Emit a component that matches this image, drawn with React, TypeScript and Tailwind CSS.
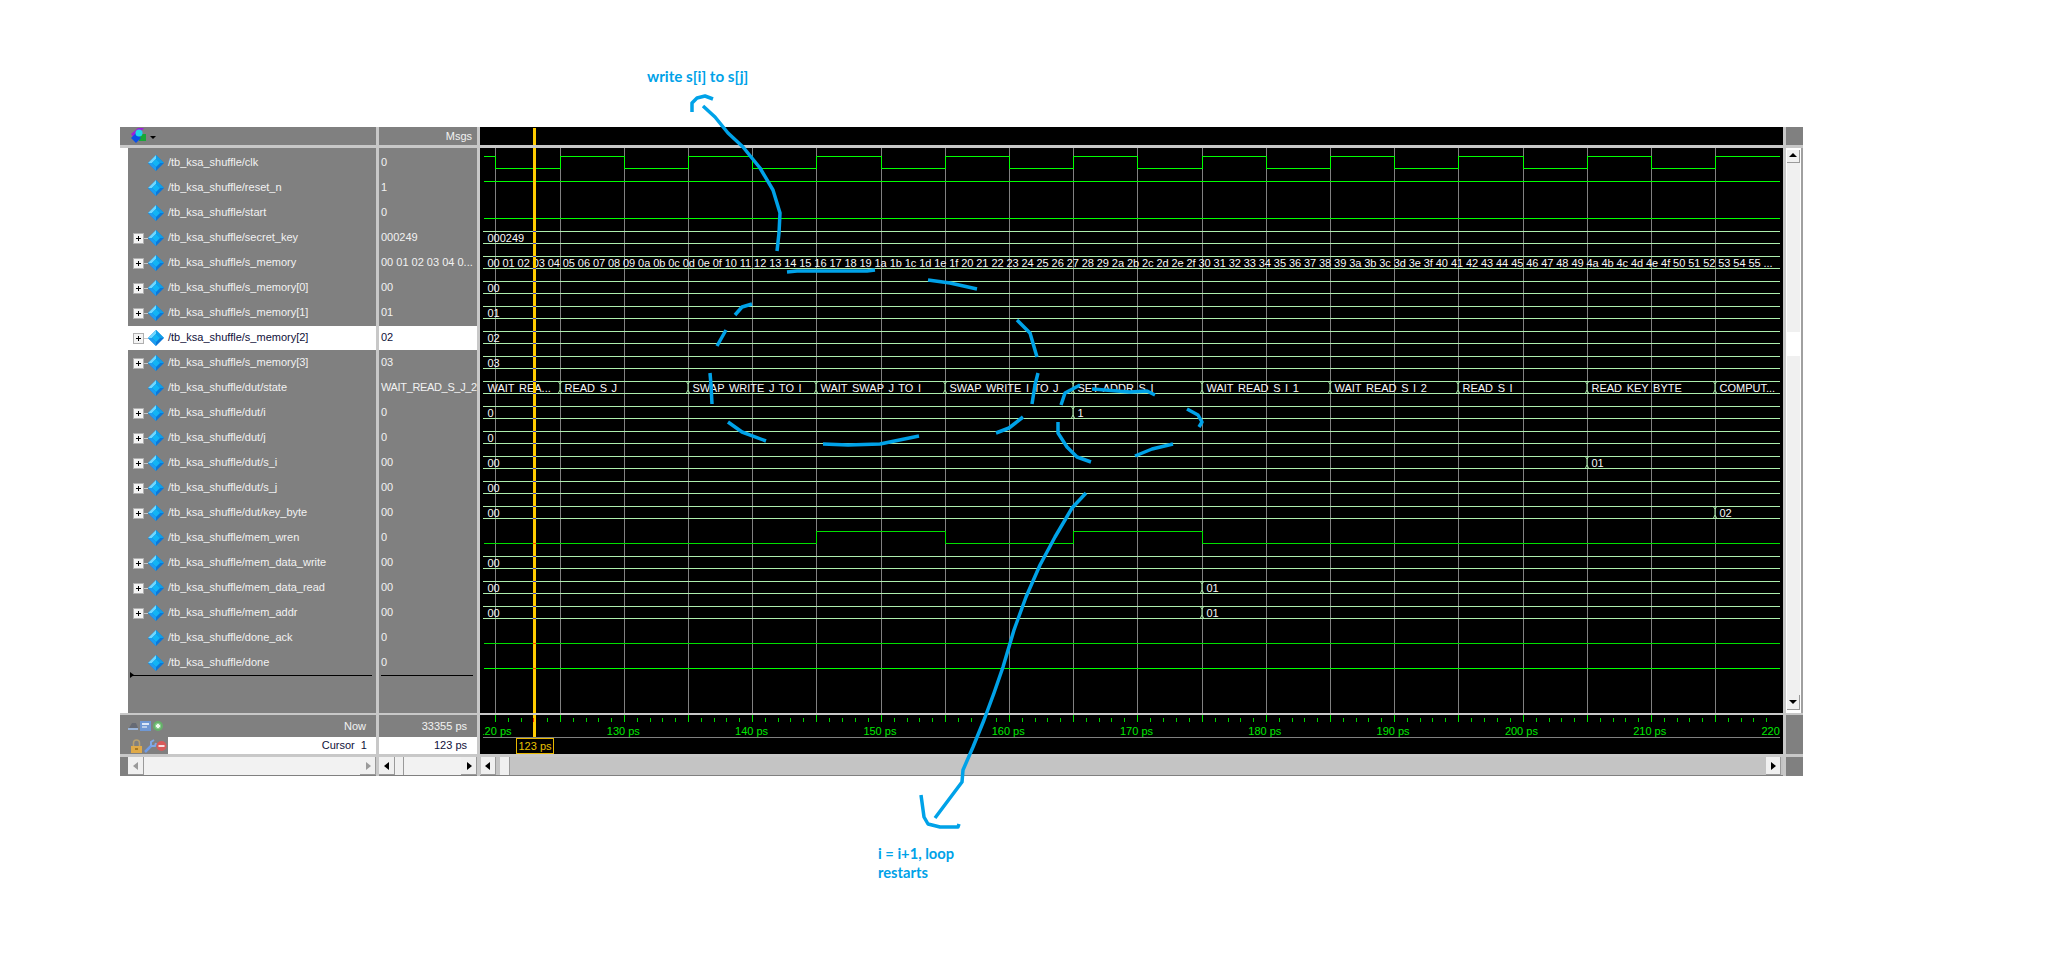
import React from "react";

const font = { fontFamily: "'Liberation Sans', Arial, sans-serif" };

// clock edges, these are also the vertical grid lines of the wave window
const edges = [495, 560, 624, 688, 752, 816, 881, 945, 1009, 1073, 1137, 1202, 1266, 1330, 1394, 1458, 1523, 1587, 1651, 1715];
const lineColor = "#aeeeae";
const green = "#00ff00";

type Seg = { x: number; text: string; len?: number };
type Signal = {
  name: string;
  value: string;
  bus?: boolean;
  level?: 0 | 1;
  segs?: Seg[];
};

const hexList = Array.from({ length: 86 }, (_, i) => i.toString(16).padStart(2, "0")).join(" ") + " ...";

const signals: Signal[] = [
  { name: "/tb_ksa_shuffle/clk", value: "0" },
  { name: "/tb_ksa_shuffle/reset_n", value: "1", level: 1 },
  { name: "/tb_ksa_shuffle/start", value: "0", level: 0 },
  { name: "/tb_ksa_shuffle/secret_key", value: "000249", bus: true, segs: [{ x: 487.5, text: "000249" }] },
  { name: "/tb_ksa_shuffle/s_memory", value: "00 01 02 03 04 0...", bus: true, segs: [{ x: 487.5, text: hexList, len: 1285 }] },
  { name: "/tb_ksa_shuffle/s_memory[0]", value: "00", bus: true, segs: [{ x: 487.5, text: "00" }] },
  { name: "/tb_ksa_shuffle/s_memory[1]", value: "01", bus: true, segs: [{ x: 487.5, text: "01" }] },
  { name: "/tb_ksa_shuffle/s_memory[2]", value: "02", bus: true, segs: [{ x: 487.5, text: "02" }] },
  { name: "/tb_ksa_shuffle/s_memory[3]", value: "03", bus: true, segs: [{ x: 487.5, text: "03" }] },
  {
    name: "/tb_ksa_shuffle/dut/state",
    value: "WAIT_READ_S_J_2",
    segs: [
      { x: 487.5, text: "WAIT  REA..." },
      { x: 560, text: "READ  S  J" },
      { x: 688, text: "SWAP  WRITE  J  TO  I" },
      { x: 816, text: "WAIT  SWAP  J  TO  I" },
      { x: 945, text: "SWAP  WRITE  I  TO  J" },
      { x: 1073, text: "SET  ADDR  S  I" },
      { x: 1202, text: "WAIT  READ  S  I  1" },
      { x: 1330, text: "WAIT  READ  S  I  2" },
      { x: 1458, text: "READ  S  I" },
      { x: 1587, text: "READ  KEY  BYTE" },
      { x: 1715, text: "COMPUT..." },
    ],
  },
  { name: "/tb_ksa_shuffle/dut/i", value: "0", bus: true, segs: [{ x: 487.5, text: "0" }, { x: 1073, text: "1" }] },
  { name: "/tb_ksa_shuffle/dut/j", value: "0", bus: true, segs: [{ x: 487.5, text: "0" }] },
  { name: "/tb_ksa_shuffle/dut/s_i", value: "00", bus: true, segs: [{ x: 487.5, text: "00" }, { x: 1587, text: "01" }] },
  { name: "/tb_ksa_shuffle/dut/s_j", value: "00", bus: true, segs: [{ x: 487.5, text: "00" }] },
  { name: "/tb_ksa_shuffle/dut/key_byte", value: "00", bus: true, segs: [{ x: 487.5, text: "00" }, { x: 1715, text: "02" }] },
  { name: "/tb_ksa_shuffle/mem_wren", value: "0" },
  { name: "/tb_ksa_shuffle/mem_data_write", value: "00", bus: true, segs: [{ x: 487.5, text: "00" }] },
  { name: "/tb_ksa_shuffle/mem_data_read", value: "00", bus: true, segs: [{ x: 487.5, text: "00" }, { x: 1202, text: "01" }] },
  { name: "/tb_ksa_shuffle/mem_addr", value: "00", bus: true, segs: [{ x: 487.5, text: "00" }, { x: 1202, text: "01" }] },
  { name: "/tb_ksa_shuffle/done_ack", value: "0", level: 0 },
  { name: "/tb_ksa_shuffle/done", value: "0", level: 0 },
];

// hand drawn paint strokes, page coordinates
const strokes = [
  "692,112 692,103 697,98 705,96 713,99",
  "703,106 715,117 728,133 743,147 760,168 773,190 780,213 779,233 777,251",
  "787,272 797,271 867,271 875,270",
  "928,280 950,283 977,289",
  "735,315 742,307 752,304",
  "717,346 726,330",
  "1017,320 1030,333 1037,357",
  "710,373 711,385 712,404",
  "728,422 742,432 766,441",
  "823,444 848,445 880,444 919,436",
  "996,433 1009,428 1023,417",
  "1038,373 1035,385 1032,404",
  "1061,405 1065,393 1080,385",
  "1092,389 1130,392 1147,391 1155,395",
  "1187,409 1198,415 1202,422 1199,427",
  "1058,422 1058,433 1067,447 1077,457 1091,462",
  "1135,456 1152,449 1173,444",
  "1086,493 1072,508 1055,537 1040,565 1026,597 1014,630 1003,667 994,693 984,720 973,747 963,770 962,782 947,802 935,818",
  "921,795 924,817 928,824 940,827 958,827 959,824",
];

function Diamond() {
  return (
    <svg width="16" height="16" viewBox="0 0 16 16" className="shrink-0" shapeRendering="geometricPrecision">
      <polygon points="8,0 16,8 8,16 0,8" fill="#0a78d8" />
      <polygon points="8,0 0,8 4,8 8,4" fill="#6fd8ff" />
      <polygon points="8,0 16,8 12,8 8,4" fill="#0f9fe8" />
      <polygon points="0,8 8,16 8,12 4,8" fill="#1f9cf0" />
      <polygon points="8,4 12,8 8,12 4,8" fill="#12b4f4" />
    </svg>
  );
}

function Plus() {
  return (
    <svg width="15" height="12" viewBox="0 0 15 12" className="shrink-0">
      <rect x="10" y="6" width="5" height="1" fill="#c8c8c8" />
      <rect x="0.5" y="1.5" width="10" height="10" fill="#f4f4f4" stroke="#b0b0b0" />
      <rect x="3" y="6" width="5" height="1" fill="#000" />
      <rect x="5" y="4" width="1" height="5" fill="#000" />
    </svg>
  );
}

function SignalRow({ s, selected }: { s: Signal; selected: boolean }) {
  return (
    <div className={`flex h-6 items-center mb-px pl-[5px] text-[11px] ${selected ? "bg-white text-[#10103a]" : "text-[#f2f2f2]"}`}>
      <div className="w-[15px] shrink-0">{s.bus ? <Plus /> : null}</div>
      <Diamond />
      <span className="ml-1 mb-[2px] whitespace-pre">{s.name}</span>
    </div>
  );
}

function ValueRow({ s, selected }: { s: Signal; selected: boolean }) {
  return (
    <div className={`flex h-6 items-center mb-px pl-[2px] pb-[2px] text-[11px] whitespace-pre ${selected ? "bg-white text-[#10103a]" : "text-[#f2f2f2]"}`}>
      {s.value === "WAIT_READ_S_J_2" ? <span className="tracking-[-0.35px]">{s.value}</span> : s.value}
    </div>
  );
}

function Bracket({ x, top, bottom }: { x: number; top: number; bottom: number }) {
  return (
    <path
      d={`M${x - 2} ${top} L${x} ${top + 3} V${bottom - 3} L${x - 2} ${bottom + 1} M${x + 2} ${top} L${x} ${top + 3} M${x} ${bottom - 3} L${x + 2} ${bottom + 1}`}
      stroke={lineColor}
      fill="none"
    />
  );
}

function levelPath(i: number, transitions: number[], startHigh: boolean) {
  const hi = 156.5 + 25 * i;
  const lo = 168.5 + 25 * i;
  let high = startHigh;
  let d = `M484 ${high ? hi : lo}`;
  for (const x of transitions) {
    d += ` H${x + 0.5}`;
    high = !high;
    d += ` V${high ? hi : lo}`;
  }
  return d + " H1780";
}

function Waves() {
  return (
    <svg width="1303" height="565" viewBox="480 148 1303 565" className="block" style={font}>
      <rect x="480" y="148" width="1303" height="565" fill="#000" />
      <g shapeRendering="crispEdges">
        {edges.map((x) => (
          <line key={x} x1={x + 0.5} x2={x + 0.5} y1="148" y2="713" stroke="#808080" />
        ))}
      </g>
      {signals.map((s, i) => {
        const top = 156 + 25 * i;
        const bottom = 168 + 25 * i;
        return (
          <g key={s.name}>
            {s.segs ? (
              <g shapeRendering="crispEdges">
                <line x1="483" x2="1780" y1={top + 0.5} y2={top + 0.5} stroke={lineColor} />
                <line x1="483" x2="1780" y1={bottom + 0.5} y2={bottom + 0.5} stroke={lineColor} />
              </g>
            ) : null}
            {s.segs?.map((seg) => (
              <g key={seg.x}>
                {seg.x > 490 ? <Bracket x={seg.x} top={top} bottom={bottom} /> : null}
                <text
                  x={seg.x > 490 ? seg.x + 4.5 : seg.x}
                  y={bottom - 1}
                  fontSize="11"
                  fill="#f8f8f8"
                  wordSpacing={s.bus ? undefined : "-0.75"}
                  className="whitespace-pre"
                  textLength={seg.len}
                  lengthAdjust={seg.len ? "spacing" : undefined}
                >
                  {seg.text}
                </text>
              </g>
            ))}
          </g>
        );
      })}
      <g shapeRendering="crispEdges" fill="none" stroke={green}>
        <path d={levelPath(0, edges, true)} />
        <path d={levelPath(1, [], true)} />
        <path d={levelPath(2, [], false)} />
        <path d={levelPath(15, [816, 945, 1073, 1202], false)} stroke="#00e000" />
        <path d={levelPath(19, [], false)} stroke="#00e000" />
        <path d={levelPath(20, [], false)} />
      </g>
      <rect x="533" y="148" width="3" height="565" fill="#ffcc00" />
      <g shapeRendering="crispEdges">
        {signals.map((s, i) =>
          s.segs ? (
            <g key={s.name}>
              <rect x="533" y={156 + 25 * i} width="3" height="1" fill="#3c3cd8" />
              <rect x="533" y={168 + 25 * i} width="3" height="1" fill="#3c3cd8" />
            </g>
          ) : null
        )}
        <rect x="533" y="543" width="3" height="1" fill="#ff3000" />
        <rect x="533" y="643" width="3" height="1" fill="#ff3000" />
        <rect x="533" y="668" width="3" height="1" fill="#ff3000" />
      </g>
    </svg>
  );
}

function Timeline() {
  const minors: number[] = [];
  edges.forEach((x, k) => {
    const next = k < edges.length - 1 ? edges[k + 1] : x + 64;
    for (let m = 1; m < 5; m++) minors.push(Math.round(x + ((next - x) * m) / 5));
  });
  const labels = Array.from({ length: 11 }, (_, i) => i);
  return (
    <svg width="1303" height="39" viewBox="480 715 1303 39" className="block" style={font}>
      <defs>
        <clipPath id="time-clip">
          <rect x="483" y="715" width="1297" height="39" />
        </clipPath>
      </defs>
      <rect x="480" y="715" width="1303" height="39" fill="#000" />
      <g clipPath="url(#time-clip)">
        <g shapeRendering="crispEdges">
          {edges.map((x) => (
            <line key={x} x1={x + 0.5} x2={x + 0.5} y1="715" y2="722" stroke="#00e000" />
          ))}
          {minors.map((x) => (
            <line key={x} x1={x + 0.5} x2={x + 0.5} y1="718" y2="722" stroke="#00d000" />
          ))}
          <line x1="483" x2="1780" y1="737.5" y2="737.5" stroke="#808080" />
        </g>
        {labels.map((i) => (
          <text key={i} x={495 + i * 128.3} y="735" fontSize="11" textAnchor="middle" fill="#00e800">
            {120 + i * 10} ps
          </text>
        ))}
      </g>
      <rect x="533" y="715" width="3" height="22" fill="#ffcc00" />
      <rect x="533" y="718" width="1" height="4" fill="#ff3000" />
      <rect x="516.5" y="738.5" width="37" height="15" fill="#000" stroke="#e8b800" />
      <text x="535" y="750" fontSize="11" textAnchor="middle" fill="#e8c000">
        123 ps
      </text>
    </svg>
  );
}

function ArrowButton({ dir, disabled, className }: { dir: "left" | "right" | "up" | "down"; disabled?: boolean; className: string }) {
  const points = {
    left: "6,1 1,5 6,9",
    right: "2,1 7,5 2,9",
    up: "0,6 4,2 8,6",
    down: "0,3 8,3 4,7",
  }[dir];
  return (
    <div className={`flex shrink-0 items-center justify-center bg-[#f0f0f0] border-r border-b border-[#9a9a9a] ${className}`}>
      <svg width="8" height="10" viewBox="0 0 8 10">
        <polygon points={points} fill={disabled ? "#9a9a9a" : "#000"} />
      </svg>
    </div>
  );
}

function HeaderIcon() {
  return (
    <svg width="17" height="16" viewBox="0 0 17 16">
      <polygon points="1,6 8,0 14,0 9,6 4,10" fill="#a020d8" />
      <rect x="9" y="6" width="7" height="7" fill="#18a838" />
      <polygon points="6,5 11,10 6,15 1,10" fill="#0a50e8" />
      <circle cx="9" cy="5" r="3.5" fill="#20d8e8" />
    </svg>
  );
}

function NowIcons() {
  return (
    <svg width="36" height="12" viewBox="0 0 36 12" className="block">
      <path d="M1 8 L4 3 H8 L10 8 Z" fill="#666a74" />
      <rect x="0" y="8" width="10" height="2" fill="#9ab4d8" />
      <rect x="12" y="1" width="11" height="10" fill="#6f98d4" />
      <rect x="14" y="3" width="7" height="2" fill="#dde8f8" />
      <rect x="14" y="6" width="5" height="2" fill="#b8cce8" />
      <circle cx="30" cy="6" r="5" fill="#66b06a" />
      <circle cx="30" cy="6" r="3" fill="#8fd094" />
      <rect x="28" y="5" width="4" height="2" fill="#eef8ee" />
      <rect x="29" y="4" width="2" height="4" fill="#eef8ee" />
    </svg>
  );
}

function CursorIcons() {
  return (
    <svg width="36" height="14" viewBox="0 0 36 14" className="block">
      <path d="M2.5 7 V4 A3 3 0 0 1 8.5 4 V7" fill="none" stroke="#b8a070" strokeWidth="1.5" />
      <rect x="0" y="7" width="11" height="7" fill="#e0aa48" />
      <rect x="4" y="9" width="3" height="2" fill="#a87820" />
      <path d="M14 13 L21 6" fill="none" stroke="#6f9ce8" strokeWidth="2.5" />
      <path d="M20 7 L20 3 L23 1 M20 7 L24 7 L25 4" fill="none" stroke="#7fa8e8" strokeWidth="2" />
      <circle cx="30.5" cy="7" r="5" fill="#d85a5a" />
      <rect x="27.5" y="6" width="6" height="2" fill="#f4e0e0" />
    </svg>
  );
}

export default function App() {
  return (
    <div className="relative h-[957px] overflow-hidden bg-white pl-[120px] pt-[127px]" style={font}>
      <div className="grid w-[1683px] grid-cols-[256px_98px_1303px_17px] gap-x-[3px] bg-[#c8c8c8]">
        {/* header */}
        <div className="flex h-[18px] items-center bg-[#808080] pl-[10px]">
          <HeaderIcon />
          <div className="ml-[3px] mt-[3px] h-0 w-0 border-x-[3px] border-t-[3px] border-x-transparent border-t-black" />
        </div>
        <div className="flex h-[18px] items-center justify-end bg-[#808080] pr-[5px] text-[11px] text-[#f2f2f2]">Msgs</div>
        <svg width="1303" height="18" className="block bg-black">
          <rect x="53" y="1" width="3" height="17" fill="#ffcc00" />
        </svg>
        <div className="h-[18px] bg-[#808080]" />

        <div className="col-span-4 h-[3px]" />

        {/* names, values, waves, scrollbar */}
        <div className="h-[565px] bg-white pl-2">
          <div className="relative h-full bg-[#808080] pt-[3px]">
            {signals.map((s, i) => (
              <SignalRow key={s.name} s={s} selected={i === 7} />
            ))}
            <div className="absolute left-[2px] right-[4px] top-[527px] h-px bg-black" />
            <div className="absolute left-[2px] top-[524px] h-0 w-0 border-y-[3px] border-l-[4px] border-y-transparent border-l-black" />
          </div>
        </div>
        <div className="relative h-[565px] bg-[#808080] pt-[3px]">
          {signals.map((s, i) => (
            <ValueRow key={s.name} s={s} selected={i === 7} />
          ))}
          <div className="absolute left-[2px] right-[4px] top-[527px] h-px bg-black" />
        </div>
        <Waves />
        <div className="flex h-[565px] flex-col border-r-2 border-[#a0a0a0] bg-white pl-px pr-px pt-[2px] pb-[3px]">
          <ArrowButton dir="up" className="h-[13px]" />
          <div className="flex-1 bg-[#f0f0f0] pt-[169px]">
            <div className="h-6 bg-white" />
          </div>
          <ArrowButton dir="down" className="h-[15px]" />
        </div>

        <div className="col-span-4 h-[2px]" />

        {/* cursors */}
        <div className="flex h-[39px] flex-col bg-[#808080] text-[11px]">
          <div className="flex h-[22px] items-center justify-between pl-2 pr-[10px] text-[#f2f2f2]">
            <NowIcons />
            <span>Now</span>
          </div>
          <div className="flex h-[17px]">
            <div className="flex w-[48px] items-center justify-end pr-px">
              <CursorIcons />
            </div>
            <div className="flex flex-1 items-center justify-end bg-white pr-[9px] text-[#10103a] whitespace-pre">Cursor  1</div>
          </div>
        </div>
        <div className="flex h-[39px] flex-col bg-[#808080] text-[11px]">
          <div className="flex h-[22px] items-center justify-end pr-[10px] text-[#f2f2f2]">33355 ps</div>
          <div className="flex h-[17px] items-center justify-end bg-white pr-[10px] text-[#10103a]">123 ps</div>
        </div>
        <Timeline />
        <div className="h-[39px] bg-[#808080]" />

        <div className="col-span-4 h-[3px]" />

        {/* horizontal scrollbars */}
        <div className="flex h-[19px] border-b border-[#808080] bg-[#808080] pl-2">
          <ArrowButton dir="left" disabled className="w-4" />
          <div className="flex-1 bg-[#f2f2f2]" />
          <ArrowButton dir="right" disabled className="w-4" />
        </div>
        <div className="flex h-[19px] border-b border-[#808080] bg-[#f2f2f2]">
          <ArrowButton dir="left" className="w-4" />
          <div className="ml-px h-full w-2 border-r border-[#9a9a9a] bg-[#f0f0f0]" />
          <div className="flex-1" />
          <ArrowButton dir="right" className="w-4" />
        </div>
        <div className="flex h-[19px] border-b border-[#808080] bg-[#c4c4c4]">
          <ArrowButton dir="left" className="ml-px w-[15px]" />
          <div className="ml-1 h-full w-[10px] border-r border-[#9a9a9a] bg-[#f0f0f0]" />
          <div className="flex-1" />
          <ArrowButton dir="right" className="mr-[2px] w-[15px]" />
        </div>
        <div className="h-[19px] bg-[#808080]" />
      </div>

      {/* paint annotations on top of the screenshot */}
      <svg width="2059" height="957" className="pointer-events-none absolute inset-0">
        {strokes.map((points) => (
          <polyline key={points} points={points} fill="none" stroke="#00a2e8" strokeWidth="3.5" strokeLinejoin="round" />
        ))}
      </svg>
      <div className="absolute left-[647px] top-[67px] text-[15.2px] font-bold leading-[18px] text-[#00a2e8]" style={{ fontFamily: "Lato, sans-serif" }}>
        write s[i] to s[j]
      </div>
      <div className="absolute left-[878px] top-[844px] text-[14.7px] font-bold leading-[19px] text-[#00a2e8]" style={{ fontFamily: "Lato, sans-serif" }}>
        i = i+1, loop
        <br />
        restarts
      </div>
    </div>
  );
}
